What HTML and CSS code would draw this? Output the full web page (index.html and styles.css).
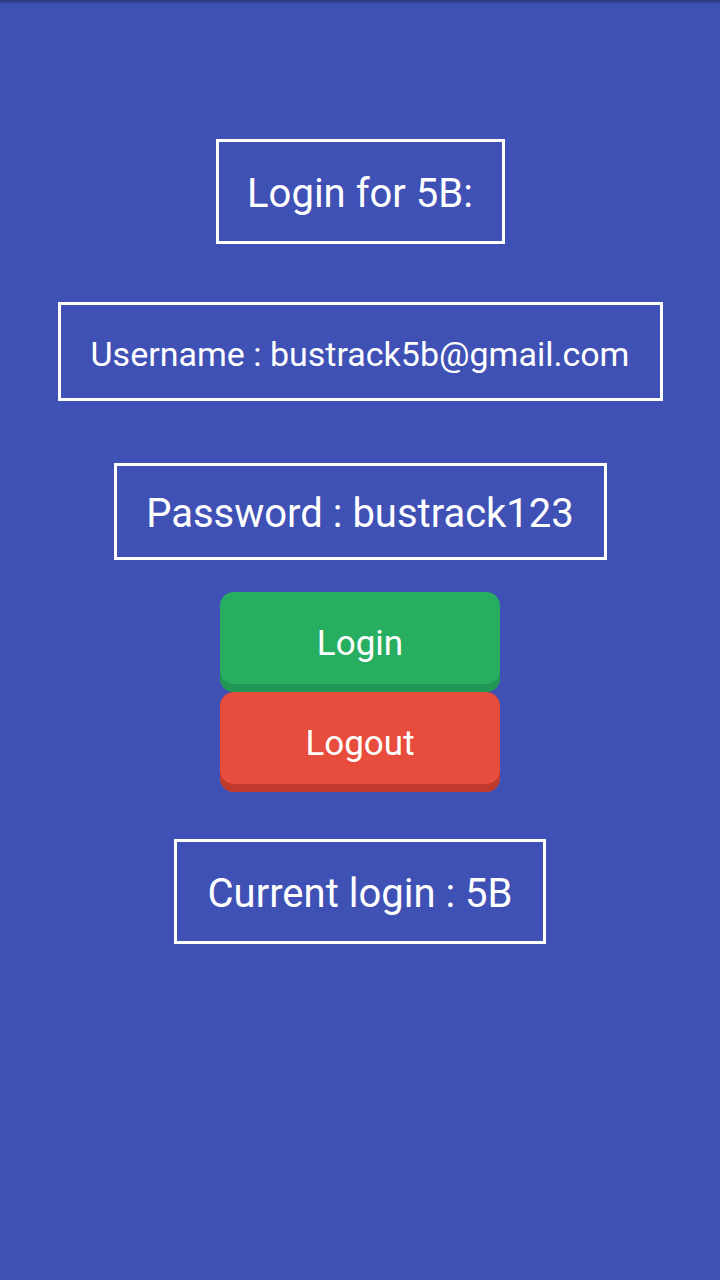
FILE: index.html
```html
<!DOCTYPE html>
<html>
<head>
<meta charset="utf-8">
<link rel="stylesheet" href="styles.css">
</head>
<body>
<main class="screen">
  <div class="box box-title">Login for 5B:</div>
  <div class="box box-user">Username : bustrack5b@gmail.com</div>
  <div class="box box-pass">Password : bustrack123</div>
  <div class="buttons">
    <button class="btn btn-login">Login</button>
    <button class="btn btn-logout">Logout</button>
  </div>
  <div class="box box-current">Current login : 5B</div>
</main>
</body>
</html>
```
FILE: styles.css
```css
html, body {
  margin: 0;
  padding: 0;
  height: 100%;
}
body {
  background: #3f51b5;
  font-family: Roboto, "Noto Sans", sans-serif;
  color: #ffffff;
}
.screen {
  min-height: 1280px;
  box-sizing: border-box;
  display: flex;
  flex-direction: column;
  align-items: center;
  padding-top: 139px;
  box-shadow: inset 0 4px 3px -2px rgba(0, 0, 0, 0.35);
}
.box {
  box-sizing: border-box;
  border: 3px solid #ffffff;
  display: flex;
  align-items: center;
  justify-content: center;
  white-space: nowrap;
  line-height: 1;
  padding-top: 4px;
}
.box-title {
  height: 105px;
  width: 289px;
  font-size: 40px;
}
.box-user {
  margin-top: 58px;
  height: 99px;
  width: 605px;
  font-size: 34px;
}
.box-pass {
  margin-top: 62px;
  height: 97px;
  width: 493px;
  font-size: 40px;
}
.buttons {
  margin-top: 32px;
  display: flex;
  flex-direction: column;
}
.btn {
  width: 280px;
  height: 100px;
  border: none;
  border-radius: 14px;
  color: #ffffff;
  font-family: Roboto, "Noto Sans", sans-serif;
  font-size: 35px;
  line-height: 1;
  padding: 3px 0 0 0;
  margin: 0;
}
.btn-login {
  background: #27ae60;
  box-shadow: inset 0 -8px 0 #229655;
}
.btn-logout {
  background: #e74c3c;
  box-shadow: inset 0 -8px 0 #bf3a2c;
}
.box-current {
  margin-top: 47px;
  height: 105px;
  width: 372px;
  font-size: 40px;
}
```
